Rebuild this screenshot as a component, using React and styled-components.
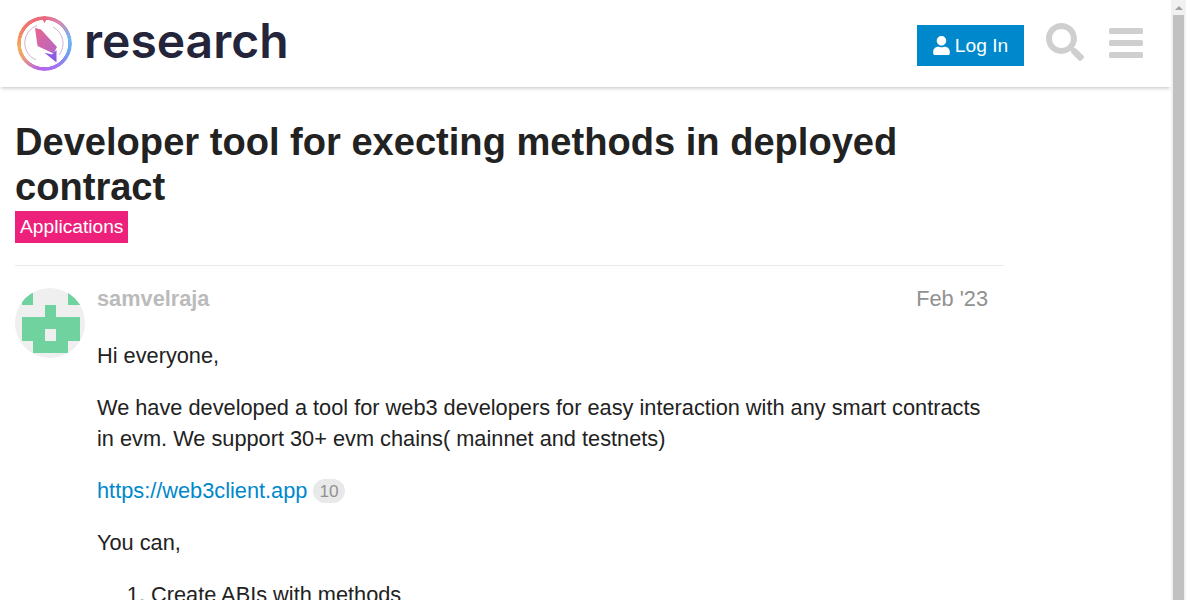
import React from "react";
import styled, { createGlobalStyle } from "styled-components";

const GlobalStyle = createGlobalStyle`
  html, body { margin: 0; padding: 0; height: 100%; overflow: hidden; background: #fff; }
  body { font-family: "Liberation Sans", Arial, sans-serif; color: #222; }
`;

const Page = styled.div`
  display: flex;
  width: 1186px;
  height: 600px;
  overflow: hidden;
`;

const Viewport = styled.div`
  flex: 1;
  min-width: 0;
  overflow: hidden;
`;

const Scrollbar = styled.div`
  width: 15px;
  flex: none;
  background: #f1f1f1;
  display: flex;
  flex-direction: column;
  align-items: center;
`;

const ScrollArrow = styled.div`
  height: 15px;
  width: 100%;
  display: flex;
  align-items: center;
  justify-content: center;
  &::before {
    content: "";
    border-left: 4px solid transparent;
    border-right: 4px solid transparent;
    border-bottom: 4px solid #a3a3a3;
  }
`;

const ScrollThumb = styled.div`
  width: 11px;
  flex: 1;
  background: #c1c1c1;
`;

const Header = styled.header`
  box-sizing: border-box;
  height: 87px;
  background: #fff;
  box-shadow: 0 2px 4px -1px rgba(0, 0, 0, 0.25);
  display: flex;
  align-items: center;
  padding: 4px 28px 0 17px;
`;

const Brand = styled.div`
  display: flex;
  align-items: center;
  gap: 12px;
  flex: 1;
  margin-bottom: 4px;
`;

const LogoMark = styled.div`
  position: relative;
  width: 55px;
  height: 55px;
  &::before {
    content: "";
    position: absolute;
    inset: 0;
    border-radius: 50%;
    background: conic-gradient(
      #e8687f 0deg,
      #d889b4 35deg,
      #6fb6f2 80deg,
      #6aa4f4 110deg,
      #a274f0 150deg,
      #b864e6 195deg,
      #ee9a78 235deg,
      #f4ad57 260deg,
      #f2776c 310deg,
      #e8687f 360deg
    );
    -webkit-mask: radial-gradient(closest-side, transparent 85%, #000 87%);
    mask: radial-gradient(closest-side, transparent 85%, #000 87%);
  }
`;

const Wordmark = styled.span`
  font-family: Inter, sans-serif;
  font-weight: 600;
  font-size: 48px;
  line-height: 56px;
  color: #24243a;
  position: relative;
  top: -3px;
`;

const LoginButton = styled.button`
  height: 41px;
  width: 107px;
  padding: 0;
  margin-right: 22px;
  border: 0;
  background: #0088cc;
  color: #fff;
  font: 19.2px "Liberation Sans", Arial, sans-serif;
  display: flex;
  align-items: center;
  justify-content: center;
  gap: 5px;
`;

const SearchButton = styled.div`
  display: flex;
  margin-right: 25px;
  margin-bottom: 7px;
`;

const MenuButton = styled.div`
  display: flex;
  margin-bottom: 6px;
`;

const Main = styled.main`
  width: 989px;
  padding: 33px 0 0 15px;
`;

const Title = styled.h1`
  margin: 0;
  font-size: 38.08px;
  line-height: 45px;
  font-weight: 700;
  color: #222;
`;

const Category = styled.a`
  display: inline-block;
  background: #ed207b;
  color: #fff;
  font-size: 19.2px;
  line-height: 32px;
  padding: 0 5px;
  margin-top: 1px;
`;

const Post = styled.article`
  margin-top: 22px;
  border-top: 1px solid #e9e9e9;
  padding-top: 22px;
  display: grid;
  grid-template-columns: 70px 1fr;
  column-gap: 12px;
`;

const Avatar = styled.svg`
  display: block;
  width: 70px;
  height: 70px;
  border-radius: 50%;
`;

const PostHead = styled.div`
  display: flex;
  justify-content: space-between;
  padding-right: 16px;
  line-height: 21px;
  margin-bottom: 31px;
`;

const Username = styled.span`
  font-size: 21.76px;
  font-weight: 700;
  color: #bbb;
`;

const PostDate = styled.span`
  font-size: 21.76px;
  color: #919191;
`;

const Body = styled.div`
  font-size: 21.76px;
  line-height: 31px;
  color: #222;
  padding-right: 16px;
  p { margin: 0 0 21px; }
`;

const LinkText = styled.a`
  color: #0088cc;
`;

const Clicks = styled.span`
  display: inline-block;
  margin-left: 6px;
  padding: 0 6px;
  border-radius: 12px;
  background: #e9e9e9;
  color: #919191;
  font-size: 17.28px;
  line-height: 24px;
  vertical-align: 1px;
`;

const Steps = styled.ol`
  margin: 0;
  padding-left: 54px;
`;

function Logo() {
  return (
    <LogoMark>
      <svg width="55" height="55" viewBox="0 0 55 55">
        <defs>
          <linearGradient id="gem" x1="0" y1="0" x2="1" y2="1">
            <stop offset="0" stopColor="#e8668f" />
            <stop offset="1" stopColor="#b566c8" />
          </linearGradient>
        </defs>
        <path d="M25 2.500h5L27.500 7z" fill="#e5647f" />
        <path d="M20 9.500A18.500 18.500 0 0 0 19 44M36 11A18.500 18.500 0 0 1 42 39" fill="none" stroke="#c7aecb" strokeWidth="0.9" />
        <path d="M18 12 L24 13.500 L40 31 L36.500 37.500 L20.500 30 Z" fill="url(#gem)" />
        <path d="M39.500 34 L39.500 46.500 L27.500 36.700 L35 38.500 Z" fill="#8b5be6" />
      </svg>
    </LogoMark>
  );
}

function UserIcon() {
  return (
    <svg width="17" height="19" viewBox="0 0 448 512" fill="#fff">
      <path d="M224 256c70.700 0 128-57.300 128-128S294.700 0 224 0 96 57.300 96 128s57.300 128 128 128zm89.600 32h-16.700c-22.200 10.200-46.900 16-72.900 16s-50.600-5.800-72.900-16h-16.700C60.200 288 0 348.200 0 422.400V464c0 26.500 21.500 48 48 48h352c26.500 0 48-21.500 48-48v-41.600c0-74.200-60.200-134.400-134.400-134.400z" />
    </svg>
  );
}

function SearchIcon() {
  return (
    <svg width="38" height="38" viewBox="0 0 512 512" fill="#cfcfcf">
      <path d="M505 442.700L405.300 343c-4.500-4.500-10.600-7-17-7H372c27.600-35.300 44-79.700 44-128C416 93.100 322.900 0 208 0S0 93.100 0 208s93.100 208 208 208c48.300 0 92.700-16.400 128-44v16.300c0 6.400 2.500 12.500 7 17l99.700 99.700c9.400 9.400 24.600 9.400 33.900 0l28.300-28.300c9.400-9.400 9.400-24.600.1-34zM208 336c-70.700 0-128-57.200-128-128 0-70.700 57.200-128 128-128 70.700 0 128 57.200 128 128 0 70.700-57.200 128-128 128z" />
    </svg>
  );
}

function MenuIcon() {
  return (
    <svg width="34" height="30" viewBox="0 0 34 30" fill="#cfcfcf">
      <rect x="0" y="0" width="34" height="6" rx="1.500" />
      <rect x="0" y="12" width="34" height="6" rx="1.500" />
      <rect x="0" y="24" width="34" height="6" rx="1.500" />
    </svg>
  );
}

function Identicon() {
  return (
    <Avatar viewBox="0 0 70 70" shapeRendering="crispEdges">
      <rect width="70" height="70" fill="#efefef" />
      <g fill="#70d29e">
        <rect x="7" y="5" width="11" height="12" />
        <rect x="53" y="5" width="12" height="12" />
        <rect x="30" y="17" width="11" height="12" />
        <rect x="7" y="29" width="58" height="24" />
        <rect x="18" y="53" width="35" height="12" />
      </g>
      <rect x="30" y="41" width="11" height="12" fill="#efefef" />
    </Avatar>
  );
}

export default function App() {
  return (
    <Page>
      <GlobalStyle />
      <Viewport>
        <Header>
          <Brand>
            <Logo />
            <Wordmark>research</Wordmark>
          </Brand>
          <LoginButton>
            <UserIcon />
            Log In
          </LoginButton>
          <SearchButton><SearchIcon /></SearchButton>
          <MenuButton><MenuIcon /></MenuButton>
        </Header>
        <Main>
          <Title>Developer tool for execting methods in deployed contract</Title>
          <Category>Applications</Category>
          <Post>
            <Identicon />
            <div>
              <PostHead>
                <Username>samvelraja</Username>
                <PostDate>Feb '23</PostDate>
              </PostHead>
              <Body>
                <p>Hi everyone,</p>
                <p>We have developed a tool for web3 developers for easy interaction with any smart contracts in evm. We support 30+ evm chains( mainnet and testnets)</p>
                <p><LinkText>https://web3client.app</LinkText><Clicks>10</Clicks></p>
                <p>You can,</p>
                <Steps><li>Create ABIs with methods</li></Steps>
              </Body>
            </div>
          </Post>
        </Main>
      </Viewport>
      <Scrollbar>
        <ScrollArrow />
        <ScrollThumb />
      </Scrollbar>
    </Page>
  );
}
